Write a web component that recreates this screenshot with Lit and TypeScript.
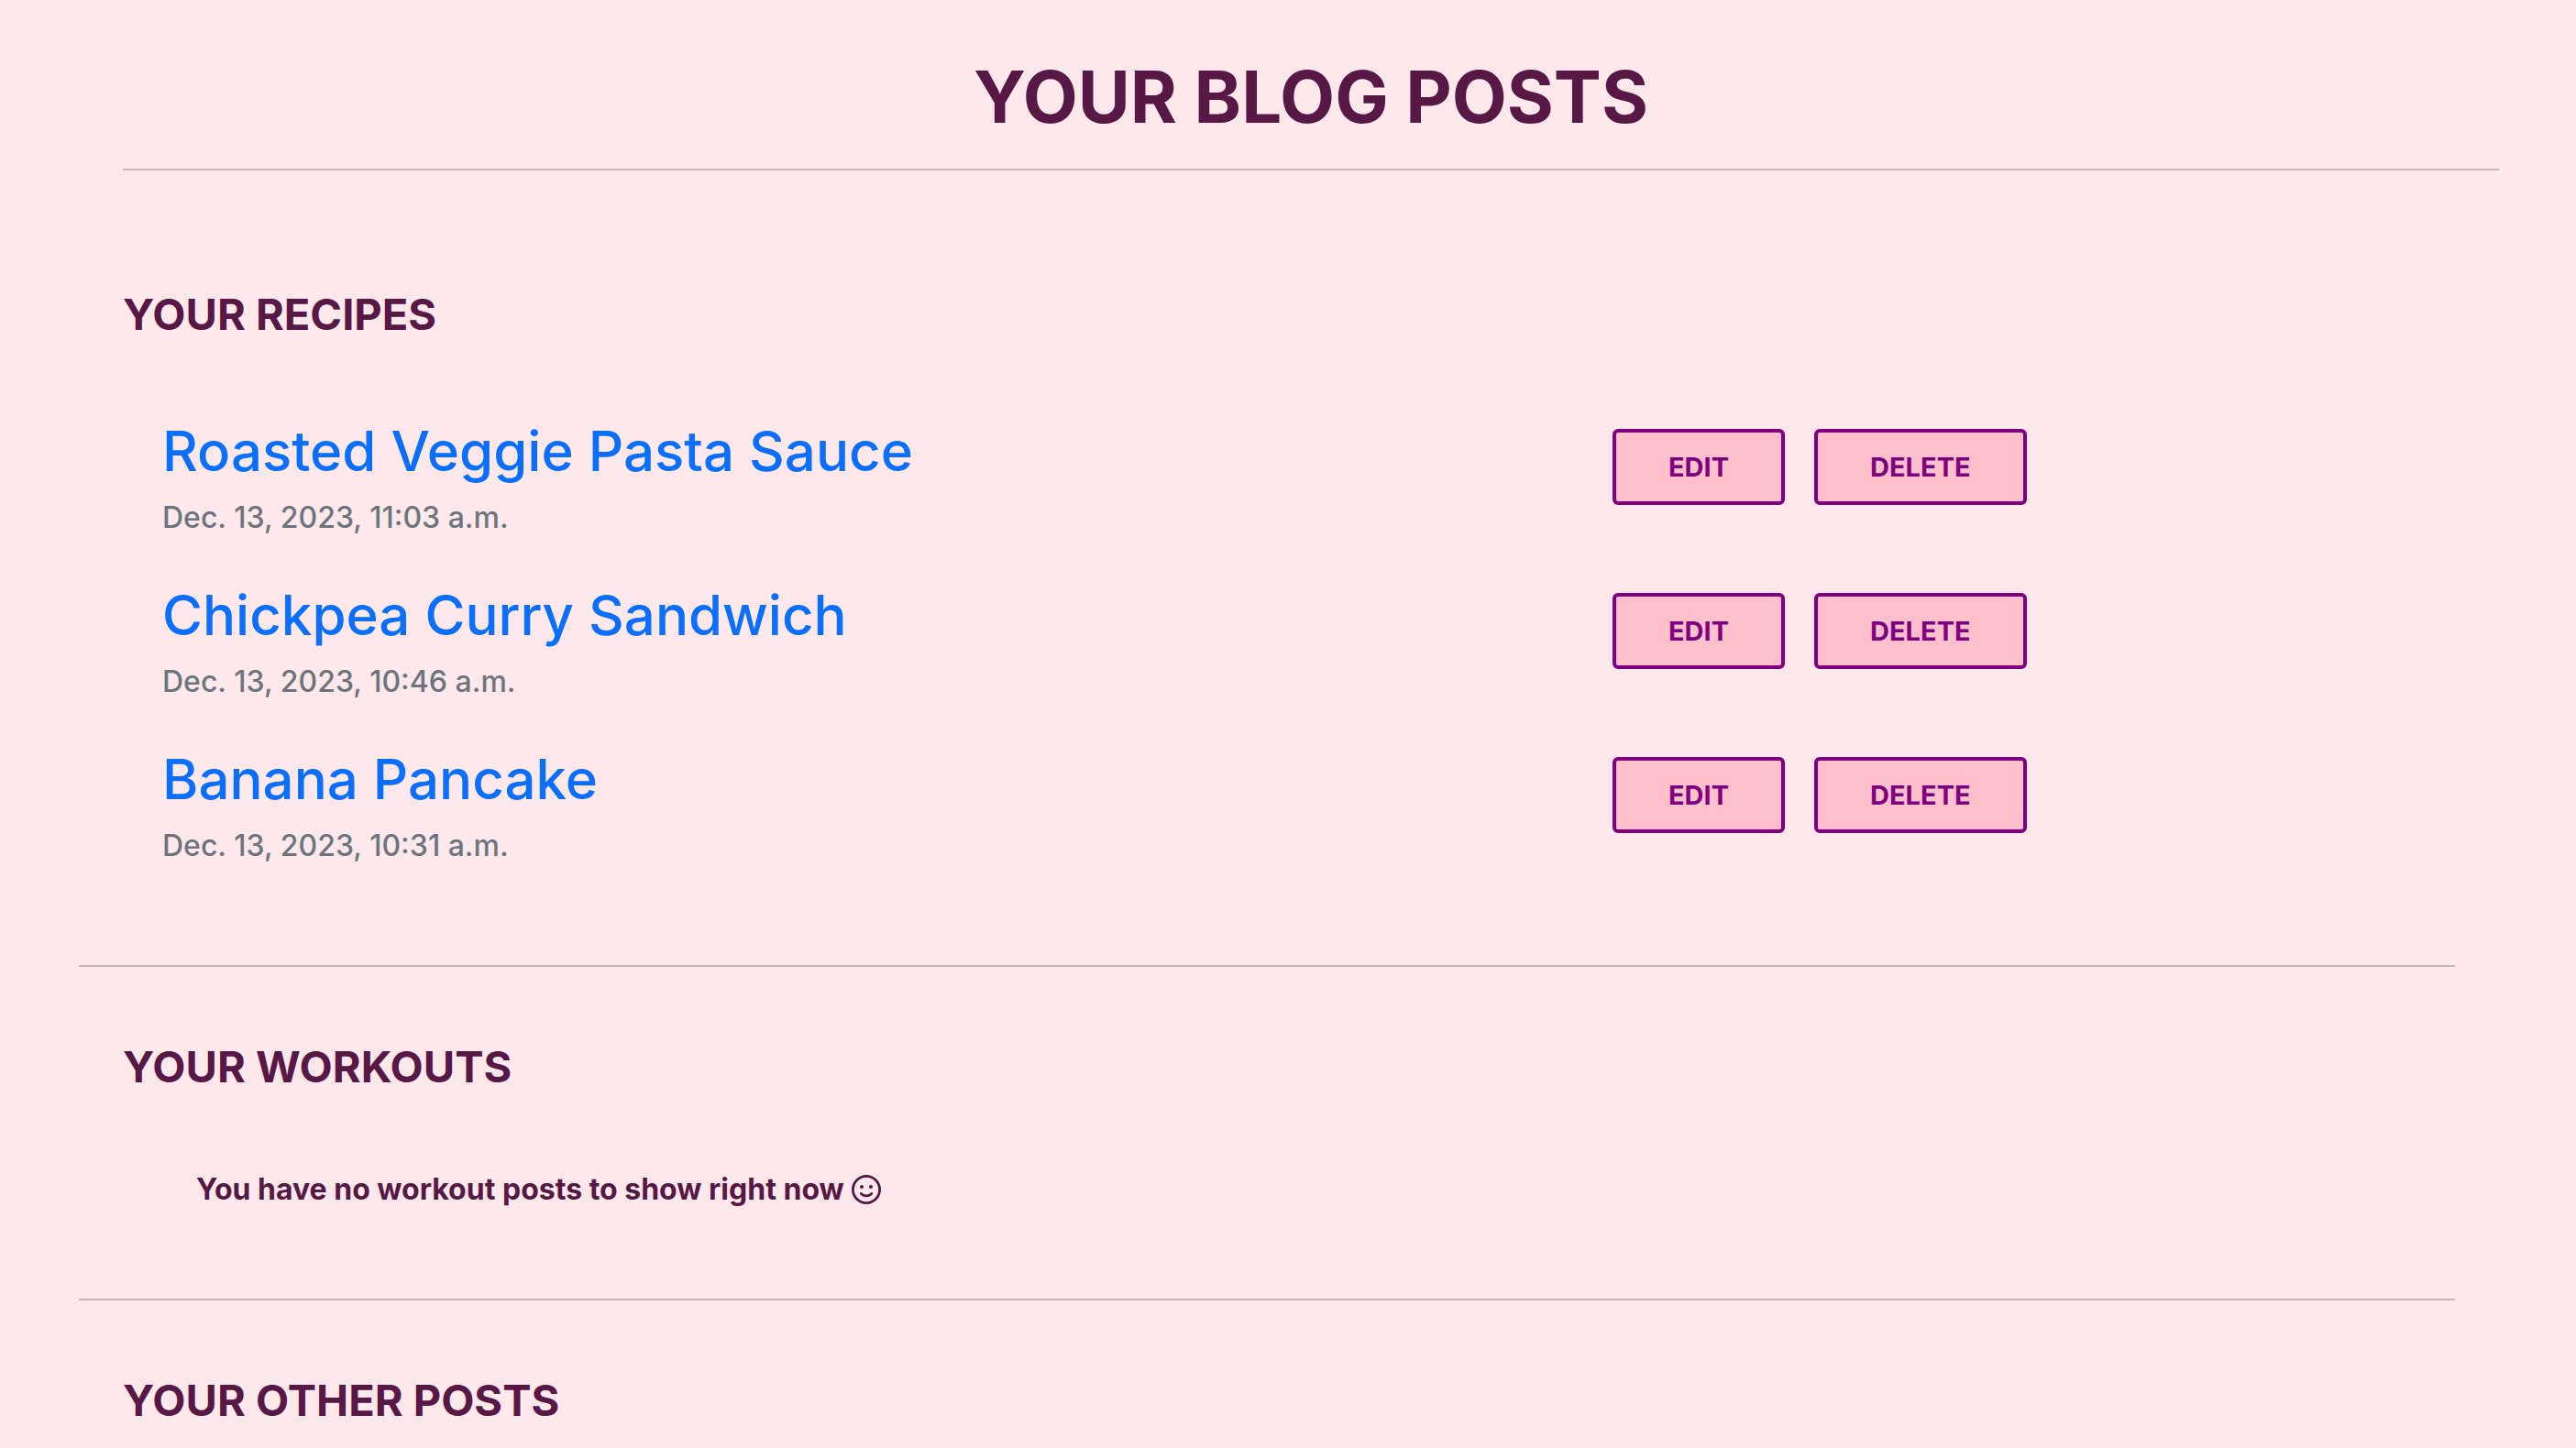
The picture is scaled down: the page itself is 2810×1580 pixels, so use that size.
import { LitElement, html, css } from "lit";
import { customElement, property } from "lit/decorators.js";

interface Post {
  title: string;
  date: string;
}

const RECIPES: Post[] = [
  { title: "Roasted Veggie Pasta Sauce", date: "Dec. 13, 2023, 11:03 a.m." },
  { title: "Chickpea Curry Sandwich", date: "Dec. 13, 2023, 10:46 a.m." },
  { title: "Banana Pancake", date: "Dec. 13, 2023, 10:31 a.m." },
];

@customElement("post-row")
export class PostRow extends LitElement {
  @property({ attribute: false }) post!: Post;

  static styles = css`
    :host {
      display: grid;
      grid-template-columns: 2fr 1fr;
      align-items: start;
    }
    .text {
      display: flex;
      flex-direction: column;
      align-items: flex-start;
      gap: 11px;
    }
    .title {
      margin: 0;
      font-size: 60px;
      line-height: 76px;
      font-weight: 500;
    }
    .link {
      color: #0a6eff;
      text-decoration: none;
    }
    .date {
      color: #6c757d;
      font-size: 32px;
      line-height: 48px;
      font-weight: 500;
    }
    .actions {
      display: flex;
      gap: 32px;
      padding-top: 14px;
    }
    .button {
      border: 4px solid #800080;
      border-radius: 6px;
      background: #ffc0cb;
      color: #800080;
      font: inherit;
      font-size: 29px;
      line-height: 43px;
      font-weight: 700;
      padding: 16px 57px;
      cursor: pointer;
    }
  `;

  render() {
    return html`
      <div class="text">
        <h3 class="title"><a class="link" href="#">${this.post.title}</a></h3>
        <time class="date">${this.post.date}</time>
      </div>
      <div class="actions">
        <button class="button" type="button">EDIT</button>
        <button class="button" type="button">DELETE</button>
      </div>
    `;
  }
}

@customElement("app-root")
export class AppRoot extends LitElement {
  static styles = css`
    :host {
      display: block;
      box-sizing: border-box;
      min-height: 100vh;
      padding: 58px 84px 16px 86px;
      background: #ffe8eb;
      color: #581845;
      font-family: Inter, "Liberation Sans", sans-serif;
    }
    .header {
      margin-left: 48px;
    }
    .heading {
      margin: 0;
      font-size: 78px;
      line-height: 96px;
      font-weight: 700;
      text-align: center;
    }
    .rule {
      margin: 0;
      border: 0;
      border-top: 2px solid #c8b5b9;
    }
    .header .rule {
      margin-top: 30px;
    }
    .content {
      margin-right: 48px;
    }
    .section {
      padding: 80px 0 95px 48px;
    }
    .recipes {
      padding: 128px 0 106px 48px;
    }
    .last {
      padding-bottom: 0;
    }
    .subheading {
      margin: 0;
      font-size: 47px;
      line-height: 58px;
      font-weight: 700;
    }
    .list {
      display: grid;
      gap: 44px;
      margin: 82px 128px 0 43px;
      padding: 0;
      list-style: none;
    }
    .empty {
      display: flex;
      align-items: center;
      gap: 8px;
      margin: 81px 0 0 80px;
      font-size: 32px;
      line-height: 48px;
      font-weight: 700;
    }
    .smile {
      width: 32px;
      height: 32px;
    }
  `;

  render() {
    return html`
      <header class="header">
        <h1 class="heading">YOUR BLOG POSTS</h1>
        <hr class="rule" />
      </header>
      <main class="content">
        <section class="section recipes">
          <h2 class="subheading">YOUR RECIPES</h2>
          <ul class="list">
            ${RECIPES.map((post) => html`<li><post-row .post=${post}></post-row></li>`)}
          </ul>
        </section>
        <hr class="rule" />
        <section class="section">
          <h2 class="subheading">YOUR WORKOUTS</h2>
          <p class="empty">
            You have no workout posts to show right now
            <svg class="smile" viewBox="0 0 32 32" fill="none" stroke="currentColor" aria-hidden="true">
              <circle cx="16" cy="16" r="14.6" stroke-width="2.8" />
              <circle cx="11" cy="13" r="2" fill="currentColor" stroke="none" />
              <circle cx="21" cy="13" r="2" fill="currentColor" stroke="none" />
              <path d="M10.2 20.4c3 3.4 8.600 3.400 11.600 0" stroke-width="2.800" stroke-linecap="round" />
            </svg>
          </p>
        </section>
        <hr class="rule" />
        <section class="section last">
          <h2 class="subheading">YOUR OTHER POSTS</h2>
        </section>
      </main>
    `;
  }
}
